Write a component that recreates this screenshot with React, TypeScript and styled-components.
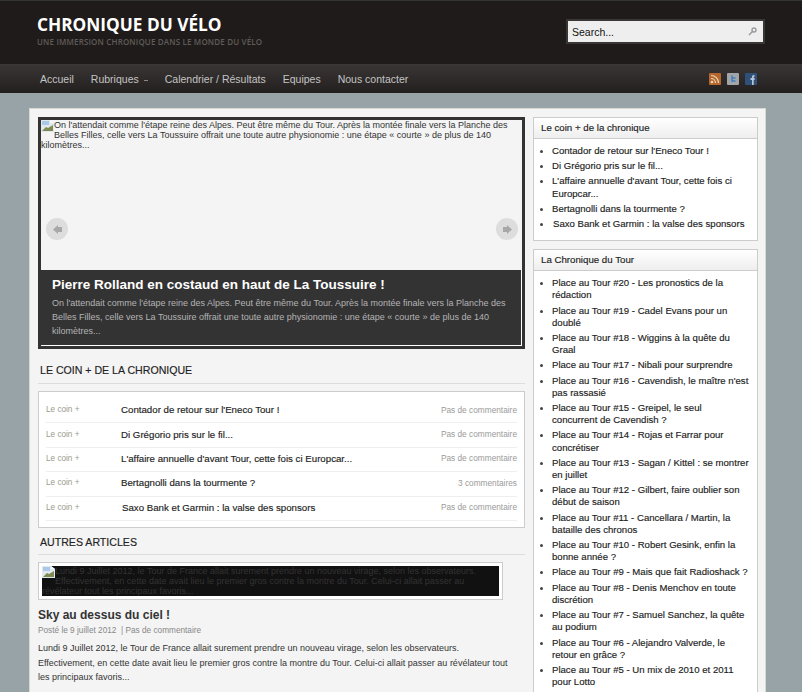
import styled, { createGlobalStyle } from 'styled-components';

const GlobalStyle = createGlobalStyle`
  html, body {
    margin: 0;
    padding: 0;
    height: 692px;
    overflow: hidden;
    background: #98a3a8;
    font-family: "Liberation Sans", Arial, sans-serif;
  }
  * { box-sizing: border-box; }
`;

const coinItems = [
  { title: "Contador de retour sur l'Eneco Tour !", comments: 'Pas de commentaire' },
  { title: 'Di Grégorio pris sur le fil...', comments: 'Pas de commentaire' },
  { title: "L'affaire annuelle d'avant Tour, cette fois ci Europcar...", comments: 'Pas de commentaire' },
  { title: 'Bertagnolli dans la tourmente ?', comments: '3 commentaires' },
  { title: 'Saxo Bank et Garmin : la valse des sponsors', comments: 'Pas de commentaire', lead: true },
];

const tourItems = [
  'Place au Tour #20 - Les pronostics de la rédaction',
  'Place au Tour #19 - Cadel Evans pour un doublé',
  'Place au Tour #18 - Wiggins à la quête du Graal',
  'Place au Tour #17 - Nibali pour surprendre',
  "Place au Tour #16 - Cavendish, le maître n'est pas rassasié",
  'Place au Tour #15 - Greipel, le seul concurrent de Cavendish ?',
  'Place au Tour #14 - Rojas et Farrar pour concrétiser',
  'Place au Tour #13 - Sagan / Kittel : se montrer en juillet',
  'Place au Tour #12 - Gilbert, faire oublier son début de saison',
  'Place au Tour #11 - Cancellara / Martin, la bataille des chronos',
  'Place au Tour #10 - Robert Gesink, enfin la bonne année ?',
  'Place au Tour #9 - Mais que fait Radioshack ?',
  'Place au Tour #8 - Denis Menchov en toute discrétion',
  'Place au Tour #7 - Samuel Sanchez, la quête au podium',
  'Place au Tour #6 - Alejandro Valverde, le retour en grâce ?',
  'Place au Tour #5 - Un mix de 2010 et 2011 pour Lotto',
];

const Header = styled.header`
  height: 64px;
  background: #1f1b1a;
  border-top: 1px solid #333;
  display: flex;
  justify-content: space-between;
  padding: 15px 37px 0;
`;

const Brand = styled.div`
  display: flex;
  flex-direction: column;
`;

const SiteTitle = styled.h1`
  margin: 0;
  font: 700 17.25px/18px "Open Sans", sans-serif;
  color: #fff;
`;

const Tagline = styled.div`
  margin-top: 3px;
  font: 600 8px/10px "Open Sans", sans-serif;
  letter-spacing: 0.16px;
  color: #5f5b59;
`;

const SearchBox = styled.div`
  width: 199px;
  height: 25px;
  margin-top: 3px;
  border: 2px solid #3a3636;
  background: #eee;
  display: flex;
  align-items: center;
  justify-content: space-between;
  padding: 0 6px 0 4px;
  font-size: 10.5px;
  color: #111;
`;

const Nav = styled.nav`
  height: 29px;
  background: linear-gradient(#383534, #231f1e);
  border-top: 1px solid #3a3736;
  display: flex;
  align-items: center;
  justify-content: space-between;
  padding: 0 45px 0 40px;
`;

const NavLinks = styled.div`
  display: flex;
  gap: 17px;
`;

const NavLink = styled.a`
  font-size: 10.5px;
  color: #c4c4c4;
  display: flex;
  align-items: center;
  gap: 5px;
`;

const Caret = styled.span`
  width: 4px;
  height: 1px;
  margin-top: 2px;
  background: #888;
`;

const Social = styled.div`
  display: flex;
  gap: 6px;
`;

const Page = styled.main`
  width: 737px;
  margin: 15px 0 0 29px;
  padding: 8px 0 0 8px;
  background: #f4f4f4;
  border: 1px solid #d8d8d2;
  display: grid;
  grid-template-columns: 487px 225px;
  gap: 8px;
  align-items: start;
`;

const Left = styled.div`
  display: flex;
  flex-direction: column;
`;

const Slider = styled.div`
  height: 232px;
  border: 3px solid #333;
  background: #f4f4f4;
  position: relative;
`;

const AltText = styled.div`
  font-size: 9px;
  line-height: 10px;
  color: #333;
  padding-right: 12px;
`;

const BrokenWrap = styled.span`
  float: left;
  width: 13px;
  height: 20px;
`;

const Arrow = styled.div<{ $side: 'left' | 'right' }>`
  position: absolute;
  top: 98px;
  ${(p) => p.$side}: ${(p) => (p.$side === 'left' ? 5 : 4)}px;
  width: 22px;
  height: 22px;
  border-radius: 50%;
  background: #ddd;
  display: flex;
  align-items: center;
  justify-content: center;
`;

const Caption = styled.div`
  position: absolute;
  left: 0;
  right: 1px;
  bottom: 1px;
  height: 75px;
  background: #333;
  box-shadow: 1px 1px 0 #fff;
  padding: 6px 11px 0;
`;

const CaptionTitle = styled.div`
  font-size: 13.5px;
  line-height: 18px;
  font-weight: 700;
  color: #fff;
`;

const CaptionText = styled.div`
  margin-top: 2px;
  font-size: 9px;
  line-height: 14px;
  color: #b4b4b4;
`;

const SectionTitle = styled.h2<{ $top: number; $bottom: number }>`
  margin: ${(p) => p.$top}px 0 0;
  padding: 0 2px ${(p) => p.$bottom}px;
  font-size: 10.6px;
  line-height: 14px;
  font-weight: 400;
  color: #222;
  border-bottom: 1px solid #ddd;
  -webkit-text-stroke: 0.15px #222;
`;

const CoinBox = styled.div`
  margin-top: 7px;
  height: 137px;
  background: #fff;
  border: 1px solid #ccc;
  padding: 7px 7px 0;
`;

const CoinRow = styled.div`
  height: 24.4px;
  padding-bottom: 2px;
  display: grid;
  grid-template-columns: 75px 1fr auto;
  align-items: center;
  border-bottom: 1px solid #eee;
`;

const CoinCat = styled.span`
  font-size: 8.2px;
  color: #9a9a8a;
`;

const CoinTitle = styled.span<{ $lead?: boolean }>`
  font-size: 9.7px;
  color: #222;
  padding-left: ${(p) => (p.$lead ? 1 : 0)}px;
  -webkit-text-stroke: 0.15px #222;
`;

const CoinComments = styled.span`
  font-size: 8.3px;
  color: #9a9a9a;
`;

const Thumb = styled.div`
  margin-top: 7px;
  width: 465px;
  height: 38px;
  border: 1px solid #ccc;
  background: #fff;
  padding: 3px;
`;

const ThumbInner = styled.div`
  height: 30px;
  background: #111;
  overflow: hidden;
  font-size: 9px;
  line-height: 10px;
  color: #333;
`;

const PostTitle = styled.h3`
  margin: 7px 0 0;
  font-size: 12px;
  line-height: 16px;
  font-weight: 700;
  color: #333;
`;

const PostMeta = styled.div`
  margin-top: 2px;
  font-size: 8.25px;
  line-height: 12px;
  color: #888;
`;

const PostBody = styled.p`
  margin: 4px 0 0;
  padding-right: 12px;
  font-size: 9px;
  line-height: 14.5px;
  color: #333;
`;

const Sidebar = styled.aside`
  display: flex;
  flex-direction: column;
  gap: 8px;
`;

const Widget = styled.section`
  background: #fff;
  border: 1px solid #ccc;
`;

const WidgetTitle = styled.h4`
  margin: 0;
  height: 21px;
  padding: 0 7px;
  font-size: 9.7px;
  line-height: 19px;
  font-weight: 400;
  color: #222;
  background: linear-gradient(#fff, #eee);
  border-bottom: 1px solid #ccc;
  -webkit-text-stroke: 0.15px #222;
`;

const WidgetList = styled.ul`
  margin: 0;
  padding: 6px 8px 7px 18px;
  list-style: none;
`;

const WidgetItem = styled.li<{ $lead?: boolean }>`
  position: relative;
  font-size: 9.6px;
  line-height: 12.2px;
  margin-bottom: 3px;
  padding-left: ${(p) => (p.$lead ? 1 : 0)}px;
  color: #222;
  -webkit-text-stroke: 0.15px #222;
  &::before {
    content: '';
    position: absolute;
    left: -12px;
    top: 5px;
    width: 3px;
    height: 3px;
    border-radius: 50%;
    background: #444;
  }
`;

const BrokenImage = () => (
  <svg width="13" height="12" viewBox="0 0 13 12">
    <path d="M0 0h9l4 3v9H0z" fill="#dfe8ee" />
    <path d="M1 1h7v4H1z" fill="#a9c9e6" />
    <path d="M1 11l4-4 2 1 5-3v6z" fill="#7f8a52" />
    <path d="M9 0l4 3H9z" fill="#f8f8f8" />
  </svg>
);

const SlideArrow = ({ right }: { right?: boolean }) => (
  <svg width="11" height="11" viewBox="0 0 11 11">
    <path d={right ? 'M5 1l5 4.5L5 10V8H1V3h4z' : 'M6 1L1 5.5 6 10V8h4V3H6z'} fill="#a8a8a8" />
  </svg>
);

const SearchIcon = () => (
  <svg width="9" height="9" viewBox="0 0 9 9">
    <circle cx="6" cy="3" r="2" fill="none" stroke="#999" strokeWidth="1.4" />
    <path d="M4.5 4.5L1 8" stroke="#999" strokeWidth="1.5" />
  </svg>
);

const RssIcon = () => (
  <svg width="12" height="12" viewBox="0 0 12 12">
    <rect width="12" height="12" rx="1" fill="#b8672c" />
    <circle cx="3" cy="9" r="1.3" fill="#e8d8c0" />
    <path d="M2 5.5A4.5 4.5 0 0 1 6.5 10M2 2.5A7.5 7.5 0 0 1 9.5 10" fill="none" stroke="#e8d8c0" strokeWidth="1.2" />
  </svg>
);

const TwitterIcon = () => (
  <svg width="12" height="12" viewBox="0 0 12 12">
    <rect width="12" height="12" rx="1" fill="#a2a5a8" />
    <path d="M5 2.5v5.5h3.5M5 5h3.5" fill="none" stroke="#3f7fc0" strokeWidth="1.5" />
  </svg>
);

const FacebookIcon = () => (
  <svg width="12" height="12" viewBox="0 0 12 12">
    <rect width="12" height="12" rx="1" fill="#2f5078" />
    <path d="M7 12V7H5.5V5H7V3.5C7 2.5 8 2 9.5 2v1.7C8.8 3.7 8.7 4 8.7 5h.9v2h-.9v5z" fill="#b8c4d4" />
  </svg>
);

const App = () => {
  return (
    <>
      <GlobalStyle />
      <Header>
        <Brand>
          <SiteTitle>CHRONIQUE DU VÉLO</SiteTitle>
          <Tagline>UNE IMMERSION CHRONIQUE DANS LE MONDE DU VÉLO</Tagline>
        </Brand>
        <SearchBox>
          Search...
          <SearchIcon />
        </SearchBox>
      </Header>
      <Nav>
        <NavLinks>
          <NavLink>Accueil</NavLink>
          <NavLink>
            Rubriques <Caret />
          </NavLink>
          <NavLink>Calendrier / Résultats</NavLink>
          <NavLink>Equipes</NavLink>
          <NavLink>Nous contacter</NavLink>
        </NavLinks>
        <Social>
          <RssIcon />
          <TwitterIcon />
          <FacebookIcon />
        </Social>
      </Nav>
      <Page>
        <Left>
          <Slider>
            <AltText>
              <BrokenWrap>
                <BrokenImage />
              </BrokenWrap>
              On l'attendait comme l'étape reine des Alpes. Peut être même du Tour. Après la montée finale vers la
              Planche des Belles Filles, celle vers La Toussuire offrait une toute autre physionomie : une étape « courte
              » de plus de 140 kilomètres...
            </AltText>
            <Arrow $side="left">
              <SlideArrow />
            </Arrow>
            <Arrow $side="right">
              <SlideArrow right />
            </Arrow>
            <Caption>
              <CaptionTitle>Pierre Rolland en costaud en haut de La Toussuire !</CaptionTitle>
              <CaptionText>
                On l'attendait comme l'étape reine des Alpes. Peut être même du Tour. Après la montée finale vers la
                Planche des Belles Filles, celle vers La Toussuire offrait une toute autre physionomie : une étape «
                courte » de plus de 140 kilomètres...
              </CaptionText>
            </Caption>
          </Slider>
          <SectionTitle $top={14} $bottom={6}>
            LE COIN + DE LA CHRONIQUE
          </SectionTitle>
          <CoinBox>
            {coinItems.map((item) => (
              <CoinRow key={item.title}>
                <CoinCat>Le coin +</CoinCat>
                <CoinTitle $lead={item.lead}>{item.title}</CoinTitle>
                <CoinComments>{item.comments}</CoinComments>
              </CoinRow>
            ))}
          </CoinBox>
          <SectionTitle $top={7} $bottom={5}>
            AUTRES ARTICLES
          </SectionTitle>
          <Thumb>
            <ThumbInner>
              <BrokenWrap>
                <BrokenImage />
              </BrokenWrap>
              Lundi 9 Juillet 2012, le Tour de France allait surement prendre un nouveau virage, selon les observateurs.
              Effectivement, en cette date avait lieu le premier gros contre la montre du Tour. Celui-ci allait passer au
              révélateur tout les principaux favoris...
            </ThumbInner>
          </Thumb>
          <PostTitle>Sky au dessus du ciel !</PostTitle>
          <PostMeta>Posté le 9 juillet 2012 &nbsp;| Pas de commentaire</PostMeta>
          <PostBody>
            Lundi 9 Juillet 2012, le Tour de France allait surement prendre un nouveau virage, selon les observateurs.
            Effectivement, en cette date avait lieu le premier gros contre la montre du Tour. Celui-ci allait passer au
            révélateur tout les principaux favoris...
          </PostBody>
        </Left>
        <Sidebar>
          <Widget>
            <WidgetTitle>Le coin + de la chronique</WidgetTitle>
            <WidgetList>
              {coinItems.map((item) => (
                <WidgetItem key={item.title} $lead={item.lead}>
                  {item.title}
                </WidgetItem>
              ))}
            </WidgetList>
          </Widget>
          <Widget>
            <WidgetTitle>La Chronique du Tour</WidgetTitle>
            <WidgetList>
              {tourItems.map((item) => (
                <WidgetItem key={item}>{item}</WidgetItem>
              ))}
            </WidgetList>
          </Widget>
        </Sidebar>
      </Page>
    </>
  );
};

export default App;
